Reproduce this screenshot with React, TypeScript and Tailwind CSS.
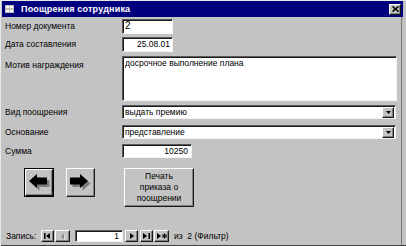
import React from 'react';

// Sunken Win9x text field
const sunken =
  'bg-white border border-t-[#5a5a5a] border-l-[#5a5a5a] border-b-[#f4f4f4] border-r-[#f4f4f4] shadow-[inset_1px_1px_0_#1a1a1a]';
// Raised Win9x button
const raised =
  'bg-[#c3c3c3] border border-t-white border-l-white border-b-[#1a1a1a] border-r-[#1a1a1a] shadow-[inset_-1px_-1px_0_#808080]';

function Label({ children }: { children: React.ReactNode }) {
  return <div className="w-[121px] shrink-0 pl-[4px] text-[8.5px] leading-[11px] text-black">{children}</div>;
}

function Combo({ value }: { value: string }) {
  return (
    <div className={`${sunken} w-[274px] h-[14px] flex items-center justify-between`}>
      <span className="pl-[2px] text-[8.5px] leading-[10px]">{value}</span>
      <div className={`${raised} w-[12px] h-[11px] mr-[1px] flex items-center justify-center`}>
        <svg width="5" height="3" viewBox="0 0 5 3">
          <path d="M0 0h5L2.5 3z" fill="#000" />
        </svg>
      </div>
    </div>
  );
}

function Arrow({ dir }: { dir: 'left' | 'right' }) {
  const pts =
    dir === 'left'
      ? '0,7 8,0 8,3.5 18,3.5 18,10.5 8,10.5 8,14'
      : '18,7 10,0 10,3.5 0,3.5 0,10.5 10,10.5 10,14';
  return (
    <svg width="21" height="17" viewBox="0 0 21 17">
      <polygon points={pts} transform="translate(2.5,2.5)" fill="#7c7c7c" />
      <polygon points={pts} fill="#000" />
    </svg>
  );
}

function NavBtn({ children, w = 13 }: { children: React.ReactNode; w?: number }) {
  return (
    <div className={`${raised} h-[12px] flex items-center justify-center`} style={{ width: w }}>
      {children}
    </div>
  );
}

export default function App() {
  return (
    <div
      className="w-[406px] h-[246px] bg-[#c3c3c3] overflow-hidden flex flex-col border-t border-l border-t-[#e8e8e8] border-l-[#e8e8e8]"
      style={{ fontFamily: '"Liberation Sans", Arial, sans-serif' }}
    >
      {/* Title bar */}
      <div className="h-[16px] mr-[3px] ml-[1px] bg-[#00007e] flex items-center">
        <svg width="9" height="8" viewBox="0 0 9 8" className="ml-[3px]">
          <rect x="0" y="0" width="9" height="8" fill="#c0c0c0" />
          <rect x="1" y="1" width="3" height="2" fill="#fff" />
          <rect x="5" y="1" width="3" height="2" fill="#fff" />
          <rect x="1" y="5" width="3" height="2" fill="#fff" />
          <rect x="5" y="5" width="3" height="2" fill="#fff" />
        </svg>
        <span className="ml-[7px] text-white font-bold text-[9px] leading-[12px] tracking-[0.2px]">
          Поощрения сотрудника
        </span>
        <div className={`${raised} ml-auto mr-[2px] w-[12px] h-[11px] flex items-center justify-center`}>
          <svg width="7" height="6" viewBox="0 0 7 6">
            <path d="M0.5 0.5l6 5M6.5 0.5l-6 5" stroke="#000" strokeWidth="1.6" />
          </svg>
        </div>
      </div>

      <div className="flex-1 flex mr-[4px] border-r border-r-[#7a7a7a]">
        <div className="flex-1 flex flex-col">
          {/* Номер документа */}
          <div className="flex items-center mt-[2px] h-[15px]">
            <Label>Номер документа</Label>
            <div className={`${sunken} w-[51px] h-[15px] pl-[2px] text-[10px] leading-[12px]`}>2</div>
          </div>
          {/* Дата составления */}
          <div className="flex items-center mt-[3px] h-[15px]">
            <Label>Дата составления</Label>
            <div className={`${sunken} w-[51px] h-[15px] pr-[2px] text-right text-[8.5px] leading-[13px]`}>25.08.01</div>
          </div>
          {/* Мотив награждения */}
          <div className="flex items-start mt-[4px]">
            <div className="mt-[4px]">
              <Label>Мотив награждения</Label>
            </div>
            <div className={`${sunken} w-[275px] h-[45px] pl-[2px] pt-[1px] text-[8.5px] leading-[11px]`}>
              досрочное выполнение плана
            </div>
          </div>
          {/* Вид поощрения */}
          <div className="flex items-center mt-[4px]">
            <Label>Вид поощрения</Label>
            <Combo value="выдать премию" />
          </div>
          {/* Основание */}
          <div className="flex items-center mt-[6px]">
            <Label>Основание</Label>
            <Combo value="представление" />
          </div>
          {/* Сумма */}
          <div className="flex items-center mt-[5px]">
            <Label>Сумма</Label>
            <div className={`${sunken} w-[70px] h-[14px] pr-[3px] text-right text-[8.5px] leading-[12px]`}>10250</div>
          </div>

          {/* Buttons */}
          <div className="flex items-start mt-[10px] pl-[23px]">
            <div className="w-[30px] h-[29px] border border-black flex">
              <div className={`${raised} flex-1 flex items-center justify-center`}>
                <Arrow dir="left" />
              </div>
            </div>
            <div className={`${raised} ml-[12px] w-[29px] h-[29px] flex items-center justify-center`}>
              <Arrow dir="right" />
            </div>
            <div
              className={`${raised} ml-[29px] w-[70px] h-[39px] flex items-center justify-center text-center text-[8.5px] leading-[11px]`}
            >
              Печать
              <br />
              приказа о
              <br />
              поощрении
            </div>
          </div>

          {/* Record navigator */}
          <div className="flex items-center mt-auto mb-[3px] pl-[5px] h-[12px] text-[8.5px] leading-[10px]">
            <span className="w-[35px]">Запись:</span>
            <NavBtn>
              <svg width="7" height="6" viewBox="0 0 7 6">
                <rect x="0" y="0" width="1.5" height="6" fill="#000" />
                <path d="M6 0v6L2 3z" fill="#000" />
              </svg>
            </NavBtn>
            <div className="ml-[1px]">
              <NavBtn w={15}>
                <svg width="5" height="7" viewBox="0 0 5 7">
                  <path d="M4 0.5v6L1 3.5z" fill="#8a8a8a" />
                  <path d="M5 1.5v6" stroke="#fff" strokeWidth="1" />
                </svg>
              </NavBtn>
            </div>
            <div className={`${sunken} ml-[5px] w-[48px] h-[12px] pr-[3px] text-right leading-[10px]`}>1</div>
            <div className="ml-[2px]">
              <NavBtn>
                <svg width="4" height="6" viewBox="0 0 4 6">
                  <path d="M0 0v6L4 3z" fill="#000" />
                </svg>
              </NavBtn>
            </div>
            <div className="ml-[2px]">
              <NavBtn>
                <svg width="7" height="6" viewBox="0 0 7 6">
                  <path d="M0 0v6L4 3z" fill="#000" />
                  <rect x="5.5" y="0" width="1.5" height="6" fill="#000" />
                </svg>
              </NavBtn>
            </div>
            <div className="ml-[1px]">
              <NavBtn w={15}>
                <svg width="10" height="6" viewBox="0 0 10 6">
                  <path d="M0 0v6L4 3z" fill="#000" />
                  <path d="M7.5 0.5v5M5 3h5M5.7 1.2l3.6 3.6M9.3 1.2l-3.6 3.6" stroke="#000" strokeWidth="1" />
                </svg>
              </NavBtn>
            </div>
            <span className="ml-[5px]">из&nbsp; 2 (Фильтр)</span>
          </div>
        </div>
      </div>
      <div className="h-[1px] bg-[#404040]" />
    </div>
  );
}
